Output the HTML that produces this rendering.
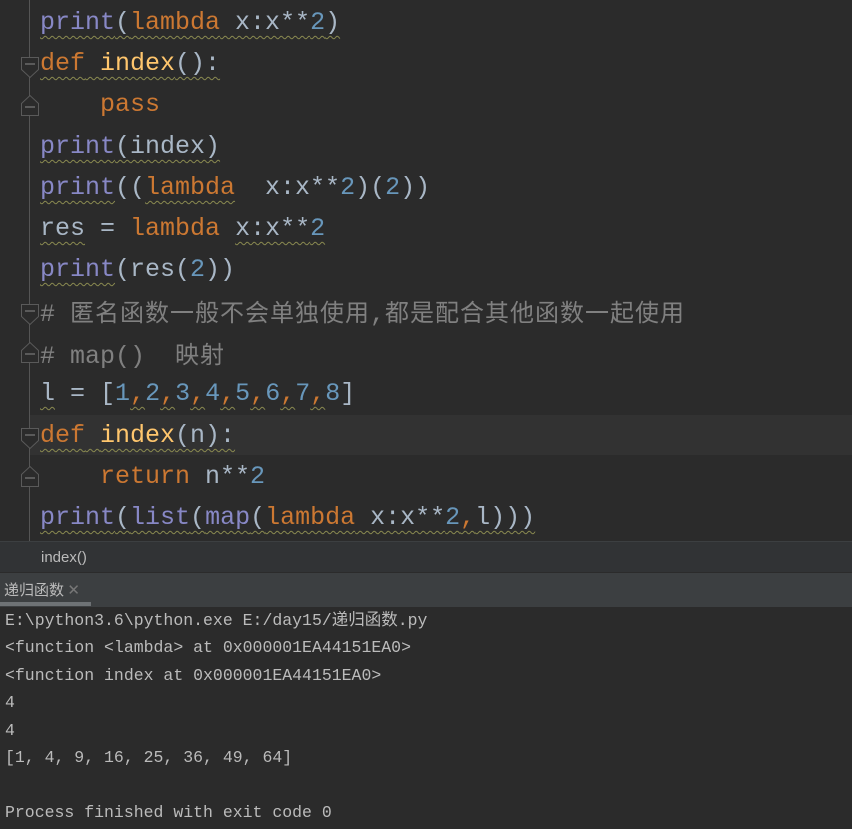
<!DOCTYPE html><html><head><meta charset="utf-8"><style>
body{margin:0;width:852px;height:829px;background:#2b2b2b;overflow:hidden;position:relative}
.ed{position:absolute;left:0;top:0;width:852px;height:541px;background:#2b2b2b}
.gl{position:absolute;left:29px;top:0;width:1px;height:541px;background:#555}
.cur{position:absolute;left:30px;top:415px;width:822px;height:40px;background:#323232}
.ln{position:absolute;left:40px;font:25px/41px "Liberation Mono","Noto Sans CJK SC",monospace;color:#a9b7c6;white-space:pre}
.p{color:#8888c6}.k{color:#cc7832}.n{color:#6897bb}.f{color:#ffc66d}.c{color:#808080}
.cj{letter-spacing:1px;font-family:"Noto Sans CJK SC",sans-serif;font-size:24px}
.w{text-decoration:underline wavy #8a8a50;text-decoration-thickness:1px;text-underline-offset:6px}
.bc{position:absolute;left:0;top:541px;width:852px;height:31px;background:#313335;border-top:1px solid #3c3f41;font:15px "Liberation Sans",sans-serif;color:#bbb}
.tb{position:absolute;left:0;top:572px;width:852px;height:34px;background:#3c3f41;border-top:1px solid #2b2b2b}
.con{position:absolute;left:5px;top:607px;font:16.5px/27.4px "Liberation Mono","Noto Sans CJK SC",monospace;color:#bbbbbb;white-space:pre}
</style></head><body>
<div class="ed"></div><div class="cur"></div><div class="gl"></div>
<svg style="position:absolute;left:0;top:0" width="40" height="541">
<g fill="#2b2b2b" stroke="#5a5a5a" stroke-width="1">
<path d="M21.5 57.5h17v12l-8.5 8l-8.5-8z"/><path d="M21.5 115.5h17v-12l-8.5-8l-8.5 8z"/>
<path d="M21.5 304.5h17v12l-8.5 8l-8.5-8z"/><path d="M21.5 362.5h17v-12l-8.5-8l-8.5 8z"/>
<path d="M21.5 428.5h17v12l-8.5 8l-8.5-8z"/><path d="M21.5 486.5h17v-12l-8.5-8l-8.5 8z"/>
</g><g stroke="#888"><path d="M25 64h10M25 107h10M25 311h10M25 354h10M25 435h10M25 478h10"/></g></svg>
<div class="ln" style="top:2px"><span class="w"><span class="p">print</span>(<span class="k">lambda</span> x:x**<span class="n">2</span>)</span></div>
<div class="ln" style="top:43px"><span class="w"><span class="k">def</span> <span class="f">index</span>():</span></div>
<div class="ln" style="top:84px">    <span class="k">pass</span></div>
<div class="ln" style="top:126px"><span class="w"><span class="p">print</span>(index)</span></div>
<div class="ln" style="top:167px"><span class="p w">print</span>((<span class="k w">lambda</span>  x:x**<span class="n">2</span>)(<span class="n">2</span>))</div>
<div class="ln" style="top:208px"><span class="w">res</span> = <span class="k">lambda</span> <span class="w">x:x**<span class="n">2</span></span></div>
<div class="ln" style="top:249px"><span class="p w">print</span>(res(<span class="n">2</span>))</div>
<div class="ln c" style="top:290px"># <span class="cj">匿名函数一般不会单独使用</span><span style="font-family:'Liberation Mono',monospace">,</span><span class="cj">都是配合其他函数一起使用</span></div>
<div class="ln c" style="top:332px"># map()  <span class="cj">映射</span></div>
<div class="ln" style="top:373px"><span class="w">l</span> = [<span class="n">1</span><span class="k w">,</span><span class="n">2</span><span class="k w">,</span><span class="n">3</span><span class="k w">,</span><span class="n">4</span><span class="k w">,</span><span class="n">5</span><span class="k w">,</span><span class="n">6</span><span class="k w">,</span><span class="n">7</span><span class="k w">,</span><span class="n">8</span>]</div>
<div class="ln" style="top:415px"><span class="w"><span class="k">def</span> <span class="f">index</span>(n):</span></div>
<div class="ln" style="top:456px">    <span class="k">return</span> n**<span class="n">2</span></div>
<div class="ln" style="top:497px"><span class="w"><span class="p">print</span>(<span class="p">list</span>(<span class="p">map</span>(<span class="k">lambda</span> x:x**<span class="n">2</span><span class="k">,</span>l)))</span></div>
<div class="bc"><span style="position:absolute;left:41px;top:7px">index()</span></div>
<div class="tb"><span style="position:absolute;left:4px;top:6px;font:15px 'Noto Sans CJK SC',sans-serif;color:#bbb">递归函数 <span style="color:#777">✕</span></span><div style="position:absolute;left:0;top:29px;width:91px;height:4px;background:#6e7275"></div></div>
<div class="con">E:\python3.6\python.exe E:/day15/递归函数.py
&lt;function &lt;lambda&gt; at 0x000001EA44151EA0&gt;
&lt;function index at 0x000001EA44151EA0&gt;
4
4
[1, 4, 9, 16, 25, 36, 49, 64]

Process finished with exit code 0</div>
</body></html>
